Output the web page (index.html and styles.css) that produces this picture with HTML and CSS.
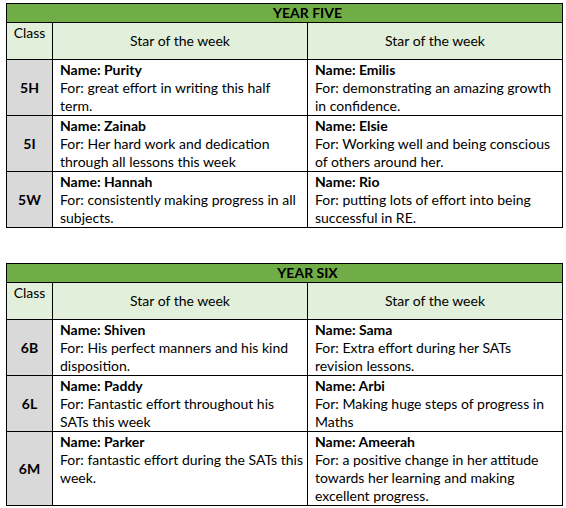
FILE: index.html
```html
<!DOCTYPE html>
<html>
<head>
<meta charset="utf-8">
<link rel="stylesheet" href="styles.css">
</head>
<body>
<div class="page">
  <table class="stars">
    <colgroup><col class="c-class"><col class="c-star"><col class="c-star"></colgroup>
    <tr class="year"><td colspan="3"><span>YEAR FIVE</span></td></tr>
    <tr class="head"><td class="h-class">Class</td><td class="h-star">Star of the week</td><td class="h-star">Star of the week</td></tr>
    <tr>
      <td class="cls">5H</td>
      <td class="entry"><b>Name: Purity</b><br>For: great effort in writing this half<br>term.</td>
      <td class="entry"><b>Name: Emilis</b><br>For: demonstrating an amazing growth<br>in confidence.</td>
    </tr>
    <tr>
      <td class="cls">5I</td>
      <td class="entry"><b>Name: Zainab</b><br>For: Her hard work and dedication<br>through all lessons this week</td>
      <td class="entry"><b>Name: Elsie</b><br>For: Working well and being conscious<br>of others around her.</td>
    </tr>
    <tr>
      <td class="cls">5W</td>
      <td class="entry"><b>Name: Hannah</b><br>For: consistently making progress in all<br>subjects.</td>
      <td class="entry"><b>Name: Rio</b><br>For: putting lots of effort into being<br>successful in RE.</td>
    </tr>
  </table>

  <table class="stars">
    <colgroup><col class="c-class"><col class="c-star"><col class="c-star"></colgroup>
    <tr class="year"><td colspan="3"><span>YEAR SIX</span></td></tr>
    <tr class="head"><td class="h-class">Class</td><td class="h-star">Star of the week</td><td class="h-star">Star of the week</td></tr>
    <tr>
      <td class="cls">6B</td>
      <td class="entry"><b>Name: Shiven</b><br>For: His perfect manners and his kind<br>disposition.</td>
      <td class="entry"><b>Name: Sama</b><br>For: Extra effort during her SATs<br>revision lessons.</td>
    </tr>
    <tr>
      <td class="cls">6L</td>
      <td class="entry"><b>Name: Paddy</b><br>For: Fantastic effort throughout his<br>SATs this week</td>
      <td class="entry"><b>Name: Arbi</b><br>For: Making huge steps of progress in<br>Maths</td>
    </tr>
    <tr>
      <td class="cls">6M</td>
      <td class="entry"><b>Name: Parker</b><br>For: fantastic effort during the SATs this<br>week.</td>
      <td class="entry"><b>Name: Ameerah</b><br>For: a positive change in her attitude<br>towards her learning and making<br>excellent progress.</td>
    </tr>
  </table>
</div>
</body>
</html>
```

FILE: styles.css
```css
html, body {
  margin: 0;
  padding: 0;
  background: #ffffff;
}
.page {
  padding: 3px 4px 0 6px;
  display: flex;
  flex-direction: column;
  gap: 35px;
  font-family: Lato, "Open Sans", sans-serif;
  font-size: 14px;
  color: #000;
}
.stars {
  border-collapse: collapse;
  width: 556px;
  table-layout: fixed;
  border: 1px solid #000;
}
.c-class { width: 46px; }
.c-star { width: 255px; }
.stars td {
  border: 1px solid #000;
  padding: 0 7px;
  line-height: 18px;
  white-space: nowrap;
}
.year td {
  background: #70ad47;
  height: 17px;
  padding: 0 0 0 46px;
  text-align: center;
  font-weight: bold;
}
.head td {
  background: #e2efda;
  height: 33px;
}
.head .h-class {
  vertical-align: top;
  text-align: center;
  height: 35px;
  padding: 1px 0 0 0;
}
.h-star {
  text-align: center;
  vertical-align: middle;
}
.stars .cls {
  background: #d9d9d9;
  text-align: center;
  font-weight: bold;
  vertical-align: middle;
  padding: 0;
}
.stars .entry {
  vertical-align: top;
  padding-top: 1px;
}
```
